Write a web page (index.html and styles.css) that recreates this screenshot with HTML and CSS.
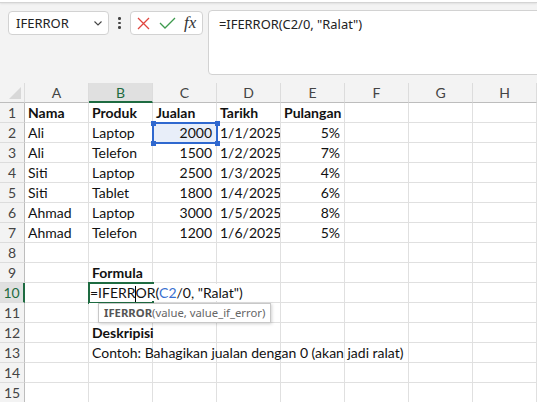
FILE: index.html
```html
<!DOCTYPE html>
<html>
<head>
<meta charset="utf-8">
<link rel="stylesheet" href="styles.css">
</head>
<body>
<div class="app-top"></div>
<div class="fbar">
  <div class="namebox">
    <span class="nb-text">IFERROR</span>
    <svg class="chev" width="8" height="5" viewBox="0 0 8 5"><path d="M0.5 0.5 L4 4 L7.5 0.5" fill="none" stroke="#444" stroke-width="1.1"/></svg>
  </div>
  <div class="dots"><i></i><i></i><i></i></div>
  <div class="btns">
    <svg class="ic-x" width="13" height="13" viewBox="0 0 13 13"><path d="M1 1 L12 12 M12 1 L1 12" stroke="#e0463f" stroke-width="1.3" fill="none"/></svg>
    <svg class="ic-ok" width="17" height="12" viewBox="0 0 17 12"><path d="M1 6 L6 11 L16 1" stroke="#3d9a4d" stroke-width="1.3" fill="none"/></svg>
    <span class="fx">fx</span>
  </div>
  <div class="formula">=IFERROR(C2/0, "Ralat")</div>
</div>
<div class="sheet">
  <div class="corner"><svg width="12" height="12" viewBox="0 0 12 12"><path d="M12 0 L12 12 L0 12 Z" fill="#d8d8d8"/></svg></div>
  <div class="ch">A</div><div class="ch ch-sel">B</div><div class="ch">C</div><div class="ch">D</div><div class="ch">E</div><div class="ch">F</div><div class="ch">G</div><div class="ch">H</div>

  <div class="rh">1</div><div class="c b">Nama</div><div class="c b">Produk</div><div class="c b">Jualan</div><div class="c b">Tarikh</div><div class="c b">Pulangan</div><div class="c"></div><div class="c"></div><div class="c"></div>
  <div class="rh">2</div><div class="c">Ali</div><div class="c">Laptop</div><div class="c r sel-fill">2000</div><div class="c r">1/1/2025</div><div class="c r">5%</div><div class="c"></div><div class="c"></div><div class="c"></div>
  <div class="rh">3</div><div class="c">Ali</div><div class="c">Telefon</div><div class="c r">1500</div><div class="c r">1/2/2025</div><div class="c r">7%</div><div class="c"></div><div class="c"></div><div class="c"></div>
  <div class="rh">4</div><div class="c">Siti</div><div class="c">Laptop</div><div class="c r">2500</div><div class="c r">1/3/2025</div><div class="c r">4%</div><div class="c"></div><div class="c"></div><div class="c"></div>
  <div class="rh">5</div><div class="c">Siti</div><div class="c">Tablet</div><div class="c r">1800</div><div class="c r">1/4/2025</div><div class="c r">6%</div><div class="c"></div><div class="c"></div><div class="c"></div>
  <div class="rh">6</div><div class="c">Ahmad</div><div class="c">Laptop</div><div class="c r">3000</div><div class="c r">1/5/2025</div><div class="c r">8%</div><div class="c"></div><div class="c"></div><div class="c"></div>
  <div class="rh">7</div><div class="c">Ahmad</div><div class="c">Telefon</div><div class="c r">1200</div><div class="c r">1/6/2025</div><div class="c r">5%</div><div class="c"></div><div class="c"></div><div class="c"></div>
  <div class="rh">8</div><div class="c"></div><div class="c"></div><div class="c"></div><div class="c"></div><div class="c"></div><div class="c"></div><div class="c"></div><div class="c"></div>
  <div class="rh">9</div><div class="c"></div><div class="c b over">Formula</div><div class="c"></div><div class="c"></div><div class="c"></div><div class="c"></div><div class="c"></div><div class="c"></div>
  <div class="rh rh-sel">10</div><div class="c"></div><div class="c edit"><span class="edit-text">=IFERR<span class="caret"></span>OR(<span class="ref">C2</span>/0, "Ralat")</span></div><div class="c"></div><div class="c"></div><div class="c"></div><div class="c"></div><div class="c"></div><div class="c"></div>
  <div class="rh">11</div><div class="c"></div><div class="c tipcell"><div class="tip"><b>IFERROR</b>(value, value_if_error)</div></div><div class="c"></div><div class="c"></div><div class="c"></div><div class="c"></div><div class="c"></div><div class="c"></div>
  <div class="rh">12</div><div class="c"></div><div class="c b over">Deskripisi</div><div class="c"></div><div class="c"></div><div class="c"></div><div class="c"></div><div class="c"></div><div class="c"></div>
  <div class="rh">13</div><div class="c"></div><div class="c over">Contoh: Bahagikan jualan dengan 0 (akan jadi ralat)</div><div class="c"></div><div class="c"></div><div class="c"></div><div class="c"></div><div class="c"></div><div class="c"></div>
  <div class="rh">14</div><div class="c"></div><div class="c"></div><div class="c"></div><div class="c"></div><div class="c"></div><div class="c"></div><div class="c"></div><div class="c"></div>
  <div class="rh">15</div><div class="c"></div><div class="c"></div><div class="c"></div><div class="c"></div><div class="c"></div><div class="c"></div><div class="c"></div><div class="c"></div>

  <div class="refbox"><i class="h tl"></i><i class="h tr"></i><i class="h bl"></i><i class="h br"></i></div>
</div>
</body>
</html>
```
FILE: styles.css
```css
* { box-sizing: border-box; }
html, body { margin: 0; padding: 0; }
body {
  width: 537px;
  height: 402px;
  overflow: hidden;
  background: #f3f3f3;
  font-family: "Noto Sans", "Open Sans", sans-serif;
}
.app-top {
  height: 3px;
  background: #fff;
  border-bottom: 1px solid #d4d4d4;
  box-shadow: 0 1px 2px rgba(0,0,0,0.08);
}
.fbar {
  height: 80px;
  display: flex;
  align-items: flex-start;
  padding: 7px 0 0 8px;
}
.namebox {
  margin-top: 1px;
  width: 101px;
  height: 24px;
  background: #fff;
  border: 1px solid #d2d2d2;
  border-radius: 4px;
  display: flex;
  align-items: center;
  justify-content: space-between;
  padding: 0 6px 0 7px;
}
.nb-text { font-size: 13px; color: #222; }
.chev { display: block; }
.dots {
  width: 21px;
  height: 26px;
  display: flex;
  flex-direction: column;
  align-items: center;
  justify-content: center;
  gap: 2px;
}
.dots i { display: block; width: 2.5px; height: 2.5px; border-radius: 50%; background: #444; }
.btns {
  margin-top: 1px;
  width: 73px;
  height: 24px;
  background: #fff;
  border: 1px solid #d2d2d2;
  border-radius: 4px;
  display: flex;
  align-items: center;
  padding-left: 6px;
}
.ic-x { display: block; }
.ic-ok { display: block; margin-left: 9px; }
.fx {
  margin-left: 8px;
  font-family: "Liberation Serif", "DejaVu Serif", serif;
  font-style: italic;
  font-size: 17px;
  color: #333;
  line-height: 20px;
}
.formula {
  margin-left: 5px;
  flex: 1;
  margin-right: -12px;
  height: 65px;
  background: #fff;
  border: 1px solid #d2d2d2;
  border-radius: 4px;
  padding: 4px 0 0 10px;
  font-size: 12.9px;
  color: #222;
}
.sheet {
  position: relative;
  display: grid;
  grid-template-columns: 25px repeat(8, 64px);
  grid-template-rows: 20px;
  grid-auto-rows: 20px;
  font-family: "Lato", "Liberation Sans", sans-serif;
  font-size: 14px;
  color: #111;
}
.corner {
  background: #f3f3f3;
  border-right: 1px solid #dcdcdc;
  border-bottom: 1px solid #bdbdbd;
  display: flex;
  align-items: flex-end;
  justify-content: flex-end;
  padding: 0 3px 3px 0;
}
.corner svg { display: block; }
.ch {
  background: #f3f3f3;
  border-right: 1px solid #dcdcdc;
  border-bottom: 1px solid #bdbdbd;
  text-align: center;
  font-size: 14px;
  color: #444;
  line-height: 20px;
}
.ch-sel {
  background: #e0e0e0;
  color: #1e6b41;
  border-bottom: 2px solid #1e6b41;
}
.rh {
  background: #f3f3f3;
  border-right: 1px solid #bdbdbd;
  border-bottom: 1px solid #dcdcdc;
  text-align: center;
  font-size: 14px;
  color: #444;
  line-height: 20px;
}
.rh-sel {
  background: #e0e0e0;
  color: #1e6b41;
  border-right: 2px solid #1e6b41;
}
.c {
  background: #fff;
  border-right: 1px solid #e0e0e0;
  border-bottom: 1px solid #e0e0e0;
  padding: 0 3px;
  line-height: 20px;
  white-space: nowrap;
  overflow: hidden;
}
.b { font-weight: 700; }
.r { text-align: right; padding-right: 4px; }
.sel-fill { background: #e8eef9; }
.over { overflow: visible; position: relative; z-index: 2; }
.edit {
  position: relative;
  z-index: 3;
  overflow: visible;
  background: #fff;
  outline: 2px solid #1e6b41;
  outline-offset: -1px;
  padding-left: 1px;
}
.edit-text { position: relative; background: #fff; padding-right: 2px; }
.ref { color: #3a6fd0; }
.caret {
  display: inline-block;
  width: 1px;
  height: 16px;
  background: #000;
  vertical-align: -4px;
  margin: 0 -0.5px;
}
.tipcell { position: relative; overflow: visible; z-index: 4; }
.tip {
  position: absolute;
  left: 9px;
  top: 0;
  height: 20px;
  padding: 0 5px;
  background: #fff;
  border: 1px solid #c8c8c8;
  box-shadow: 1px 1px 3px rgba(0,0,0,0.18);
  font-family: "Noto Sans", "Open Sans", sans-serif;
  font-size: 11.3px;
  line-height: 18px;
  color: #666;
  white-space: nowrap;
}
.tip b { color: #555; }
.refbox {
  position: absolute;
  left: 152px;
  top: 39px;
  width: 66px;
  height: 22px;
  border: 2px solid #2f68cf;
  z-index: 5;
}
.h {
  position: absolute;
  width: 5px;
  height: 5px;
  background: #2f68cf;
}
.tl { left: -3.5px; top: -3.5px; }
.tr { right: -3.5px; top: -3.5px; }
.bl { left: -3.5px; bottom: -3.5px; }
.br { right: -3.5px; bottom: -3.5px; }
```
